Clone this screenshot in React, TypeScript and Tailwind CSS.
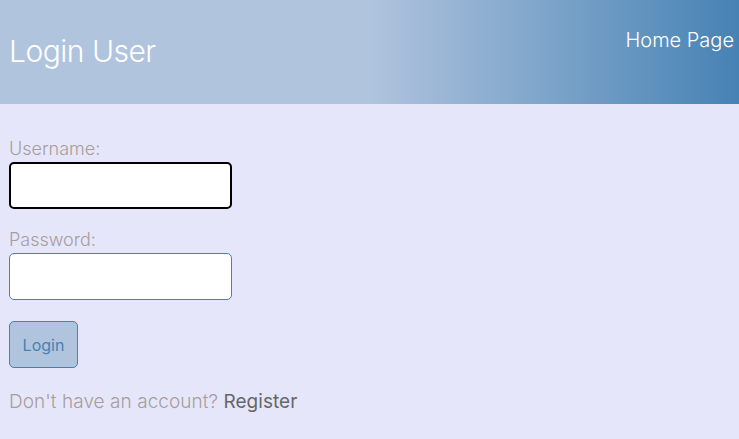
export default function App() {
  return (
    <div className="min-h-[439px] bg-[#e6e6fa] font-['Inter','Lato',sans-serif] font-light">
      <header className="flex h-[104px] justify-between bg-[linear-gradient(to_right,#b0c4de_50%,#4682b4)] pl-[9px] pr-[5px]">
        <h1 className="mt-[32px] text-[30px] leading-[38px] tracking-[-0.5px] text-white">Login User</h1>
        <a className="mt-[27px] text-[20px] leading-[26px] text-white">Home Page</a>
      </header>
      <form className="flex flex-col px-[9px] pt-[34px]">
        <label className="text-[18px] leading-[22px] text-[#a69d9d]">Username:</label>
        <input
          autoFocus
          className="mt-[2px] h-[47px] w-[223px] rounded-[5px] border-2 border-black bg-white px-[10px] text-[18px] outline-none"
        />
        <label className="mt-[20px] text-[18px] leading-[22px] text-[#a69d9d]">Password:</label>
        <input
          type="password"
          className="mt-[2px] h-[47px] w-[223px] rounded-[5px] border border-solid border-[color:#4682b4] bg-white px-[10px] outline-none"
        />
        <button
          type="button"
          className="mt-[21px] h-[47px] w-[69px] rounded-[5px] border border-solid border-[color:#4682b4] bg-[#b0c4de] text-[16px] font-normal text-[#4682b4]"
        >
          Login
        </button>
        <p className="mt-[22px] text-[19px] leading-[24px] tracking-[0.05px] text-[#a69d9d]">
          Don't have an account? <a className="font-normal text-[#666]">Register</a>
        </p>
      </form>
    </div>
  );
}
